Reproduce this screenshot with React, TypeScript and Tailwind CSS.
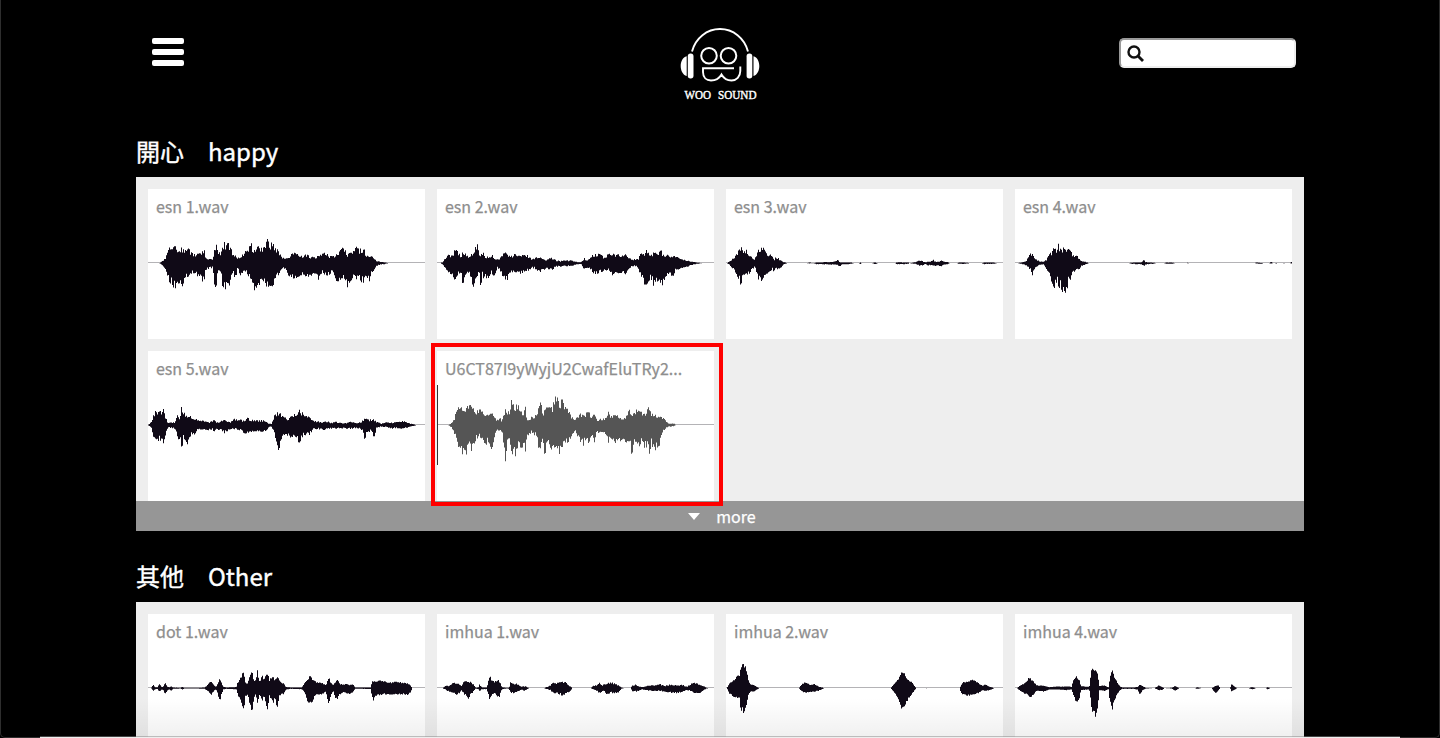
import React from "react";

type Clip = {
  name: string;
  wave: string;
  origin?: number;
  span?: number;
  rough?: number;
  active?: boolean;
};

// Each wave is a list of "x up down" samples; origin is the x of the card's left edge
// and span the card's width in the same units.
const happy: Clip[] = [
  {
    name: "esn 1.wav",
    origin: 36,
    wave: "68 0 0,78 6 6,88 18 18,96 38 45,104 46 58,114 46 70,122 44 62,132 44 50,138 40 62,150 42 40,160 36 32,172 24 28,184 26 36,195 28 48,203 40 52,208 16 20,216 12 16,228 12 14,234 35 60,239 54 74,244 30 20,252 30 22,258 48 60,264 56 68,276 56 76,283 40 40,290 28 28,298 20 45,304 18 14,314 20 40,322 30 18,334 36 32,344 58 52,350 36 50,356 38 88,364 46 66,370 48 60,378 38 48,386 50 60,394 70 70,400 44 60,406 64 66,413 46 56,422 38 36,430 26 30,440 16 16,448 12 14,456 18 34,466 26 40,475 28 44,488 26 36,500 20 30,508 24 44,520 20 36,532 16 34,548 22 48,556 26 26,566 30 34,576 22 36,588 18 26,600 24 48,610 34 48,618 42 42,626 40 52,632 26 66,644 30 48,652 34 36,660 46 52,668 38 42,676 40 54,684 36 56,690 24 36,697 22 54,704 20 32,712 16 20,720 8 10,730 4 4,742 3 3,756 0 0",
  },
  {
    name: "esn 2.wav",
    origin: 21,
    wave: "30 0 0,38 4 4,46 16 16,54 24 28,66 20 30,70 34 40,76 36 56,84 30 30,92 22 26,97 32 62,103 28 34,112 20 24,122 26 42,130 30 70,134 50 44,140 54 36,145 44 30,148 12 40,151 22 70,156 30 34,161 26 60,166 16 32,172 20 54,178 16 30,184 26 28,190 12 40,200 10 14,208 12 16,216 24 40,224 30 48,232 22 44,240 20 26,250 24 24,262 26 28,272 22 28,284 24 22,296 20 22,304 10 12,314 14 16,324 18 24,334 14 24,344 8 16,356 16 16,366 14 18,378 8 10,390 6 10,406 8 8,422 8 8,438 4 4,452 3 3,462 14 20,470 6 12,480 18 16,488 24 28,500 26 30,512 24 24,524 16 20,534 26 20,546 28 32,556 22 24,566 24 28,576 20 26,586 26 30,596 16 20,604 10 10,616 12 8,624 14 16,632 28 40,640 26 56,648 38 60,656 26 50,664 26 44,670 30 66,678 26 46,686 30 58,692 36 66,700 22 54,706 18 34,712 28 40,720 18 32,726 24 40,734 18 22,746 18 16,758 12 12,770 8 10,782 4 6,794 3 3,806 1 1,816 0 0",
  },
  {
    name: "esn 3.wav",
    origin: 18,
    wave: "20 0 0,28 6 6,38 14 16,48 24 30,54 36 44,58 40 42,62 48 74,66 38 42,74 32 30,80 38 36,86 20 30,94 18 18,102 14 12,108 26 24,114 44 44,120 46 54,126 36 46,131 46 40,136 28 36,144 20 26,150 30 28,156 20 14,161 8 28,166 18 10,174 14 20,182 8 12,188 4 4,200 0 0,258 0 0,268 2 1,278 0 0,288 2 3,304 2 3,320 4 4,336 3 4,346 5 5,352 10 6,358 2 10,364 2 3,378 2 3,392 2 2,400 0 0,414 0 0,420 2 2,424 0 0,454 0 0,464 2 3,472 0 0,524 0 0,530 3 3,546 2 3,564 2 2,566 0 0,574 1 1,588 4 3,598 8 8,608 5 6,616 2 3,622 4 6,630 4 6,638 10 8,646 4 8,654 4 6,662 8 10,670 4 4,682 3 3,688 0 0,710 0 0,716 2 2,730 2 2,750 0 0,784 0 0,790 2 3,804 2 2,820 2 2,830 0 0",
  },
  {
    name: "esn 4.wav",
    origin: 21,
    wave: "28 0 0,40 2 2,52 6 6,58 14 12,66 28 18,73 24 36,78 20 20,84 10 10,94 6 4,106 4 4,114 10 16,122 24 32,130 32 54,136 42 66,140 36 66,146 46 50,151 54 70,156 38 66,160 36 90,165 42 64,170 46 80,176 40 76,182 36 44,188 32 50,194 22 26,200 18 24,206 22 16,214 12 16,220 6 8,230 4 4,242 0 0,360 0 0,370 2 2,384 2 3,398 2 3,403 5 6,406 10 10,410 4 5,418 2 3,432 2 2,444 0 0,466 0 0,474 2 2,488 2 2,502 0 0,534 0 0,538 2 1,542 0 0,738 0 0,744 2 1,762 0 2,766 0 0,782 0 0,788 4 1,794 0 0,804 0 2,808 0 0,822 0 0,826 0 2,830 0 0,844 0 0,849 4 1,852 2 0",
  },
  {
    name: "esn 5.wav",
    origin: 36,
    wave: "36 1 1,44 8 6,50 26 28,56 36 44,62 42 54,68 36 40,74 40 44,80 50 60,84 38 46,90 16 20,96 6 6,104 8 8,116 8 10,121 22 20,124 36 36,128 20 42,133 34 34,136 60 74,141 36 36,146 36 38,152 22 54,158 24 34,166 24 26,174 22 26,184 14 12,196 14 12,208 10 12,218 8 14,228 12 12,232 16 20,240 8 12,254 12 14,264 14 22,272 10 16,282 8 14,296 20 10,304 14 12,312 20 14,320 12 20,332 22 24,344 16 18,358 14 16,374 14 18,388 12 16,398 4 6,406 4 4,412 24 22,420 34 46,427 38 74,432 32 48,438 24 34,448 20 24,458 20 34,468 26 32,476 32 40,482 42 44,490 40 46,496 38 36,504 26 28,512 26 28,520 20 26,530 12 12,544 12 10,558 8 14,572 12 12,584 6 10,598 10 10,614 6 8,630 6 10,644 10 10,658 6 8,672 8 10,680 14 18,684 18 48,690 18 22,698 14 20,706 18 14,713 16 36,720 10 8,734 4 4,752 8 6,766 8 10,778 8 8,800 12 10,816 6 6,828 3 3,840 0 0",
  },
  {
    name: "U6CT87I9yWyjU2CwafEluTRy2...",
    origin: 36,
    active: true,
    wave: "68 0 0,78 6 6,88 20 26,94 50 46,99 64 58,104 48 62,110 48 84,116 42 66,124 56 80,130 46 54,134 62 62,139 46 72,145 50 54,152 40 40,162 44 34,168 46 36,176 26 50,184 36 56,190 34 44,198 32 70,204 36 50,210 18 20,218 14 14,224 20 16,230 12 18,236 40 66,240 44 96,246 34 40,252 44 50,260 74 80,264 58 66,270 56 86,278 54 54,286 46 60,292 28 60,300 52 72,304 20 26,312 14 30,318 24 20,326 20 28,334 34 28,340 50 72,346 68 74,352 38 50,358 44 88,364 48 50,372 50 60,380 50 66,386 74 60,392 98 66,398 72 60,403 60 86,410 76 60,416 54 64,424 46 50,432 36 42,440 22 26,450 20 18,460 24 36,466 34 48,474 28 54,484 36 38,490 38 60,498 20 34,506 30 50,514 16 20,524 18 22,536 20 20,544 22 30,550 38 54,556 26 34,568 26 52,578 26 42,590 22 48,602 26 46,612 42 54,620 24 82,627 36 50,632 44 58,640 40 66,648 36 46,658 30 66,666 42 58,671 52 80,678 32 54,686 30 70,694 30 68,702 28 58,708 26 28,716 18 14,724 8 6,734 4 4,744 6 3,752 0 0",
  },
];

const other: Clip[] = [
  {
    name: "dot 1.wav",
    origin: 54,
    rough: 0.25,
    wave: "62 0 0,68 10 8,74 3 3,80 2 2,87 12 10,94 3 4,100 6 6,104 16 20,109 6 8,116 2 3,122 6 8,128 2 2,150 1 1,155 4 4,162 1 1,196 1 1,222 2 2,230 8 6,237 16 14,242 18 20,248 12 12,254 4 4,260 8 8,264 20 24,268 34 40,273 16 20,278 4 4,288 2 2,310 3 3,318 4 4,322 18 18,328 24 34,334 40 50,340 50 66,345 18 24,352 14 18,358 34 46,365 50 78,370 20 28,376 28 18,381 50 50,386 20 18,391 24 24,396 40 40,401 24 20,406 36 48,412 46 62,417 20 20,422 32 32,428 38 46,433 20 24,440 38 60,446 24 24,452 16 18,460 14 18,466 4 4,480 2 2,514 2 3,522 14 12,530 22 36,538 36 46,546 28 40,553 20 20,562 16 18,576 16 18,586 8 10,591 20 34,596 34 50,601 16 20,608 8 8,614 16 26,620 26 36,627 14 20,638 10 12,646 12 14,660 10 18,668 10 10,674 2 2,700 2 2,720 2 3,724 18 24,729 22 36,736 20 22,748 22 20,762 20 18,776 16 18,790 18 18,806 18 18,820 16 18,832 14 20,840 8 12,846 0 0",
  },
  {
    name: "imhua 1.wav",
    origin: 21,
    rough: 0.4,
    wave: "36 0 0,44 6 4,56 8 10,66 14 14,76 16 18,86 12 16,94 6 6,100 18 16,108 22 24,115 22 30,122 16 16,130 10 10,136 1 1,144 3 4,148 12 10,154 2 3,168 2 3,174 20 18,179 34 38,184 20 20,190 20 18,198 22 20,206 24 28,210 14 14,214 3 3,232 1 1,236 2 2,240 16 14,248 12 14,256 14 14,264 12 10,272 4 5,284 6 8,292 2 2,296 0 0,340 0 0,350 4 3,360 8 6,368 16 14,378 14 14,388 16 18,398 18 22,406 16 14,416 8 12,426 0 0,480 0 0,490 8 4,500 8 8,506 16 16,514 8 10,522 12 10,530 16 18,540 16 14,552 14 14,562 10 14,572 2 3,580 0 0,600 0 0,606 8 8,616 10 10,626 6 8,634 3 3,648 6 6,662 8 8,676 8 8,690 12 8,702 6 10,716 10 12,730 10 14,744 8 14,756 10 10,770 4 6,780 12 8,794 16 14,806 10 16,816 8 8,826 2 2,834 0 0",
  },
  {
    name: "imhua 2.wav",
    origin: 16,
    span: 724,
    rough: 0.22,
    wave: "18 2 2,24 14 16,34 24 24,42 32 28,50 40 30,54 66 70,57 74 60,62 70 76,68 60 60,72 30 22,78 12 10,88 8 10,102 0 0,205 0 0,214 12 10,224 18 14,234 10 12,246 12 10,256 5 8,272 0 0,446 0 0,448 4 4,456 14 14,464 24 28,472 40 50,475 52 66,480 46 60,490 24 34,500 18 18,512 0 0,536 0 0,538 1 1,540 0 0,626 0 0,629 8 16,636 18 18,646 20 22,658 24 20,668 20 18,676 14 14,684 8 6,694 10 8,704 4 6,716 0 0",
  },
  {
    name: "imhua 4.wav",
    origin: 771,
    span: 724,
    rough: 0.22,
    wave: "776 1 1,784 8 8,794 14 16,800 18 16,806 34 24,812 26 26,820 18 16,826 8 8,844 8 10,860 3 4,884 5 4,904 5 6,918 4 4,922 22 20,930 34 42,938 26 30,942 6 6,964 4 4,967 30 30,970 56 62,975 58 70,981 52 84,986 40 66,990 6 6,1004 8 8,1014 2 3,1018 30 40,1024 52 62,1030 32 36,1036 20 20,1044 6 6,1050 2 2,1080 2 2,1090 4 4,1096 10 18,1104 6 6,1112 1 1,1134 0 0,1146 8 6,1156 2 5,1160 0 0,1180 1 1,1188 6 8,1200 0 0,1240 0 0,1246 3 2,1258 0 0,1284 0 0,1290 4 10,1293 6 16,1302 8 6,1306 0 0,1332 0 0,1336 12 10,1342 6 6,1350 0 0,1380 0 0,1390 3 3,1400 0 0,1424 0 0,1430 3 3,1438 0 0",
  },
];

// Draws the wave as adjoining narrow bars, some of which stand out as spikes.
function tracePath(wave: string, origin: number, span: number, rough: number) {
  const scale = 831 / span;
  const samples = wave.split(",").map((s) => {
    const [x, up, down] = s.split(" ").map(Number);
    return [(x - origin) * scale, up, down];
  });
  const end = samples[samples.length - 1][0];
  let seed = 7 + samples.length * 13;
  const rand = () => {
    seed = (seed * 16807) % 2147483647;
    return seed / 2147483647;
  };
  const spike = () => (rand() < 0.5 ? 1.02 + rough * 0.25 * rand() : 1 - rough * (0.05 + 0.5 * rand()));
  const bars: string[] = [];
  let k = 0;
  for (let x = Math.round(samples[0][0] / 3) * 3; x <= end; x += 3) {
    while (k < samples.length - 2 && samples[k + 1][0] < x) k++;
    const [x0, u0, d0] = samples[k];
    const [x1, u1, d1] = samples[k + 1];
    const t = Math.max(0, Math.min(1, (x - x0) / (x1 - x0)));
    const up = (u0 + (u1 - u0) * t) * spike();
    const down = (d0 + (d1 - d0) * t) * spike();
    if (up + down < 0.5) continue;
    bars.push(`M${x} ${(120.5 - up).toFixed(1)}h3v${(up + down).toFixed(1)}h-3z`);
  }
  return bars.join("");
}

function Card({ clip }: { clip: Clip }) {
  return (
    <div className="relative h-[150px] bg-white">
      <div className="h-[34px] truncate px-2 pt-[5px] text-base leading-6 text-[#8e8e8e] [-webkit-text-stroke:0.25px_#8e8e8e]">
        {clip.name}
      </div>
      <svg className="block h-20 w-full" viewBox="0 0 831 240" preserveAspectRatio="none">
        <rect x="0" y="117" width="831" height="3" fill="#b4b3b6" />
        <path
          d={tracePath(clip.wave, clip.origin ?? 0, clip.span ?? 831, clip.rough ?? 0.5)}
          fill={clip.active ? "#555555" : "#100a17"}
        />
        {clip.active && <rect x="0" y="0" width="3" height="240" fill="#333333" />}
      </svg>
      {clip.active && (
        <div className="absolute -top-2 -right-[9px] -bottom-[5px] -left-1.5 z-10 border-4 border-[#ff0000]" />
      )}
    </div>
  );
}

function Logo() {
  return (
    <svg className="h-[76px] w-[84px]" viewBox="0 0 84 76" fill="none" stroke="#fff">
      <path d="M14 24.500C17.500 11 29 2 42 2S66.500 11 70 24.500" strokeWidth="1.900" />
      <circle cx="31" cy="28.800" r="7.800" strokeWidth="2" />
      <circle cx="50.500" cy="28.800" r="7.800" strokeWidth="2" />
      <path
        d="M56 41.300H25V45C25 50.500 28.500 53.500 33 53.500C38 53.500 41.500 51 43.500 47.500C45.500 51 49 53.500 53.500 53.500C58.500 53.500 62.300 49.500 62.300 44V39.500"
        strokeWidth="1.900"
      />
      <g fill="#fff" stroke="none">
        <rect x="9.800" y="26.500" width="5.700" height="25" rx="2.700" />
        <rect x="68.600" y="26.500" width="5.700" height="25" rx="2.700" />
        <path d="M8.700 29.200C4.800 30.200 2.700 34.400 2.700 39S4.800 48 8.700 49ZM75.500 29.200C79.300 30.200 81.300 34.400 81.300 39S79.300 48 75.500 49Z" />
        <g fontFamily="'Liberation Serif', serif" fontSize="11.500" stroke="#fff" strokeWidth="0.400">
          <text x="6.500" y="72" textLength="26.500" lengthAdjust="spacingAndGlyphs">
            WOO
          </text>
          <text x="40" y="72" textLength="38.500" lengthAdjust="spacingAndGlyphs">
            SOUND
          </text>
        </g>
      </g>
    </svg>
  );
}

function Section({ title, clips, more }: { title: string; clips: Clip[]; more?: boolean }) {
  return (
    <section>
      <h2 className="h-[50px] text-2xl leading-[48px] text-white [-webkit-text-stroke:0.4px_#fff]">{title}</h2>
      <div className="bg-[#eeeeee]">
        <div className="grid grid-cols-4 gap-3 px-3 pt-3">
          {clips.map((c) => (
            <Card key={c.name} clip={c} />
          ))}
        </div>
        {more && (
          <div className="flex h-[30px] items-center justify-center bg-[#969696] pl-1 text-base leading-6 text-white [-webkit-text-stroke:0.25px_#fff]">
            <svg className="mr-4 h-[7px] w-3" viewBox="0 0 12 7">
              <path d="M0 0H12L6 7Z" fill="#fff" />
            </svg>
            more
          </div>
        )}
      </div>
    </section>
  );
}

export default function App() {
  return (
    <div className="relative h-[738px] overflow-hidden bg-black font-['Noto_Sans_CJK_TC',sans-serif]">
      <div className="mx-auto w-[1168px]">
        <header className="flex h-[127px] items-start justify-between pr-2 pl-4">
          <div className="flex w-[177px] pt-[38px]">
            <div className="flex w-8 flex-col gap-[5px]">
              <span className="h-1.5 rounded-[2px] bg-white" />
              <span className="h-1.5 rounded-[2px] bg-white" />
              <span className="h-1.5 rounded-[2px] bg-white" />
            </div>
          </div>
          <div className="-ml-2 pt-[27px]">
            <Logo />
          </div>
          <div className="mt-[38px] flex h-[30px] w-[177px] items-center rounded-[5px] border-2 border-t-[#999999] border-r-[#eeeeee] border-b-[#eeeeee] border-l-[#999999] bg-white pl-1.5">
            <svg className="h-[17px] w-[17px]" viewBox="0 0 17 17" fill="none" stroke="#111" strokeWidth="2.400">
              <circle cx="7" cy="7" r="5.500" />
              <path d="M11 11L16 16" strokeWidth="2.800" />
            </svg>
          </div>
        </header>
        <Section title="開心　happy" clips={happy} more />
        <div className="h-[21px]" />
        <Section title="其他　Other" clips={other} />
      </div>
      <div className="pointer-events-none absolute inset-x-0 bottom-0 h-10 bg-linear-to-b from-transparent to-black/6" />
      <div className="pointer-events-none absolute inset-0 rounded-b-[5px] border-x border-b border-[#2e2e2e]" />
      <div className="absolute inset-x-10 bottom-0 h-px bg-[#eeeeee]" />
      <div className="absolute inset-x-10 bottom-px h-px bg-[#888888]/50" />
    </div>
  );
}
